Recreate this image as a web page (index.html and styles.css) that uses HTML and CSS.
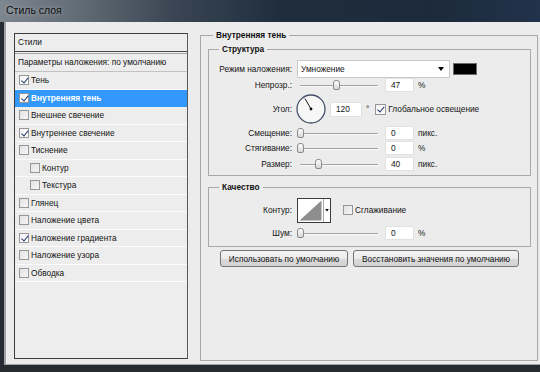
FILE: index.html
```html
<!DOCTYPE html>
<html lang="ru">
<head>
    <meta charset="UTF-8">
    <meta name="viewport" content="width=device-width, initial-scale=1.0">
    <title>Стиль слоя</title>
    <link rel="stylesheet" href="styles.css">
</head>
<body>
<div class="window">
    <div class="titlebar">Стиль слоя</div>

    <div class="dialog">
        <!-- список стилей слева -->
        <div class="styles-list">
            <div class="list-head">Стили</div>
            <div class="list-head blend">Параметры наложения: по умолчанию</div>
            <div class="item"><span class="check on"></span>Тень</div>
            <div class="item selected"><span class="check on"></span>Внутренняя тень</div>
            <div class="item"><span class="check"></span>Внешнее свечение</div>
            <div class="item"><span class="check on"></span>Внутреннее свечение</div>
            <div class="item"><span class="check"></span>Тиснение</div>
            <div class="item sub"><span class="check"></span>Контур</div>
            <div class="item sub"><span class="check"></span>Текстура</div>
            <div class="item"><span class="check"></span>Глянец</div>
            <div class="item"><span class="check"></span>Наложение цвета</div>
            <div class="item"><span class="check on"></span>Наложение градиента</div>
            <div class="item"><span class="check"></span>Наложение узора</div>
            <div class="item"><span class="check"></span>Обводка</div>
        </div>

        <!-- параметры эффекта -->
        <fieldset class="group outer">
            <legend>Внутренняя тень</legend>

            <fieldset class="group">
                <legend>Структура</legend>
                <div class="form structure">
                    <label>Режим наложения:</label>
                    <div class="ctrl">
                        <div class="select">Умножение<span class="arrow"></span></div>
                        <div class="swatch"></div>
                    </div>

                    <label>Непрозр.:</label>
                    <div class="ctrl">
                        <div class="slider"><span class="thumb" style="left: 39px"></span></div>
                        <span class="num">47</span><span class="unit">%</span>
                    </div>

                    <label>Угол:</label>
                    <div class="ctrl">
                        <svg class="dial" width="30" height="30" viewBox="0 0 30 30">
                            <circle cx="15" cy="15" r="14" fill="#f7f7f7" stroke="#46506a" stroke-width="1.3"/>
                            <line x1="15" y1="15" x2="9" y2="4.6" stroke="#1a1a1a" stroke-width="1"/>
                            <circle cx="15" cy="15" r="1.4" fill="#111"/>
                        </svg>
                        <span class="num wide">120</span><span class="unit deg">°</span>
                        <span class="check on global"></span><span>Глобальное освещение</span>
                    </div>

                    <label>Смещение:</label>
                    <div class="ctrl">
                        <div class="slider"><span class="thumb" style="left: 3px"></span></div>
                        <span class="num">0</span><span class="unit">пикс.</span>
                    </div>

                    <label>Стягивание:</label>
                    <div class="ctrl">
                        <div class="slider"><span class="thumb" style="left: 3px"></span></div>
                        <span class="num">0</span><span class="unit">%</span>
                    </div>

                    <label>Размер:</label>
                    <div class="ctrl">
                        <div class="slider"><span class="thumb" style="left: 21px"></span></div>
                        <span class="num">40</span><span class="unit">пикс.</span>
                    </div>
                </div>
            </fieldset>

            <fieldset class="group quality-box">
                <legend>Качество</legend>
                <div class="form quality">
                    <label>Контур:</label>
                    <div class="ctrl">
                        <svg class="contour" width="34" height="25" viewBox="0 0 34 25">
                            <rect x="0.5" y="0.5" width="33" height="24" fill="#fff" stroke="#3c3c3c"/>
                            <path d="M2.5 22.5 L24.5 2.5 L24.5 22.5 Z" fill="#8e8e8e"/>
                            <line x1="26.5" y1="1" x2="26.5" y2="24" stroke="#a8a8a8"/>
                            <path d="M28.2 11 h3.6 l-1.8 2.6 z" fill="#000"/>
                        </svg>
                        <span class="check smooth"></span><span>Сглаживание</span>
                    </div>

                    <label>Шум:</label>
                    <div class="ctrl">
                        <div class="slider"><span class="thumb" style="left: 3px"></span></div>
                        <span class="num">0</span><span class="unit">%</span>
                    </div>
                </div>
            </fieldset>

            <div class="buttons">
                <button class="btn">Использовать по умолчанию</button>
                <button class="btn">Восстановить значения по умолчанию</button>
            </div>
        </fieldset>
    </div>
</div>
</body>
</html>
```

FILE: styles.css
```css
html, body {
    margin: 0;
    padding: 0;
}
body {
    width: 540px;
    height: 372px;
    overflow: hidden;
    font-family: "Liberation Sans", Arial, sans-serif;
    font-size: 8.3px;
    color: #141414;
}
.window {
    height: 372px;
    display: flex;
    flex-direction: column;
    background-color: #262b32;
}
.titlebar {
    height: 22px;
    line-height: 21px;
    padding-left: 6px;
    font-size: 10.5px;
    color: #0e0e0e;
    text-shadow: 0 0 4px rgba(255, 255, 255, 0.45);
    background: linear-gradient(90deg, #7e868f 0%, #636d77 14%, #3a4653 32%, #1f2d3d 52%, #1c2a3b 80%, #22324a 100%);
}
.dialog {
    flex: 1;
    display: flex;
    align-items: flex-start;
    margin: 0 0 7px 4px;
    padding: 7px 0 0 8px;
    background-color: #ececec;
    border-left: 2px solid #9da1a7;
    border-bottom: 1px solid #a2a2a2;
}

/* список стилей */
.styles-list {
    width: 174px;
    height: 326px;
    margin-top: 4px;
    box-sizing: border-box;
    border: 1px solid #3d3d3d;
    border-right-color: #5a5a5a;
    background-color: #ededed;
}
.list-head {
    height: 17px;
    line-height: 17px;
    padding-left: 3px;
    border-bottom: 1px solid #4a4a4a;
}
.list-head.blend {
    margin-top: 1px;
    border-top: 1px solid #a5a5a5;
    border-bottom: 1px solid #c2c2c2;
}
.item {
    height: 16.5px;
    display: flex;
    align-items: center;
    padding-left: 4px;
    border-bottom: 1px solid #fbfbfb;
}
.item.sub {
    padding-left: 15px;
}
.item.selected {
    background-color: #3398fb;
    color: #fff;
    font-weight: bold;
    border-bottom-color: #3398fb;
}
.check {
    position: relative;
    flex: none;
    width: 10px;
    height: 10px;
    box-sizing: border-box;
    margin-right: 2px;
    border: 1px solid #979797;
    background: linear-gradient(135deg, #e2e2e2, #f6f6f6);
}
.check.on {
    background: linear-gradient(135deg, #f2f2f2, #ffffff);
}
.check.on::after {
    content: '';
    position: absolute;
    left: 2.5px;
    top: 0;
    width: 2.5px;
    height: 5.5px;
    border-right: 1.5px solid #23386a;
    border-bottom: 1.5px solid #23386a;
    transform: rotate(40deg);
}

/* группы */
fieldset.group {
    margin: 0;
    padding: 0;
    min-width: 0;
    border: 1px solid #a9a9a9;
    box-sizing: border-box;
}
fieldset.group legend {
    padding: 0 3px;
    margin-left: 10px;
    line-height: 12px;
    font-weight: bold;
    color: #111;
}
fieldset.outer {
    width: 338px;
    height: 332px;
    margin-left: 12px;
    padding: 0 6px 0 7px;
}
fieldset.outer > legend {
    margin-left: 5px;
}
fieldset.outer > fieldset.group {
    margin-top: 2px;
}
fieldset.outer > fieldset.quality-box {
    margin-top: 5px;
}

.form {
    display: grid;
    grid-template-columns: 83px auto;
    column-gap: 5px;
    align-items: center;
}
.form label {
    text-align: right;
}
.structure {
    grid-template-rows: 18px 14px 34px 14px 16px 16px;
    padding: 5px 0 3px;
}
.quality {
    grid-template-rows: 24px 14px;
    row-gap: 4px;
    padding: 5px 0 6px;
}
.ctrl {
    display: flex;
    align-items: center;
}

.select {
    width: 153px;
    height: 18px;
    box-sizing: border-box;
    display: flex;
    align-items: center;
    justify-content: space-between;
    padding: 0 5px 0 3px;
    background-color: #fff;
    border: 1px solid #c9c9c9;
}
.select .arrow {
    width: 0;
    height: 0;
    border-top: 4px solid #000;
    border-left: 3px solid transparent;
    border-right: 3px solid transparent;
}
.swatch {
    width: 24px;
    height: 12px;
    margin-left: 3px;
    box-sizing: border-box;
    background-color: #000;
    border: 1px solid #6b6b6b;
}

.slider {
    position: relative;
    width: 81px;
    height: 11px;
    margin-right: 7px;
}
.slider::before {
    content: '';
    position: absolute;
    left: 3px;
    right: 0;
    top: 5px;
    height: 1px;
    background-color: #a2a2a2;
    box-shadow: 0 1px 0 #fbfbfb;
}
.thumb {
    position: absolute;
    top: 0;
    width: 7px;
    height: 10px;
    margin-left: -3px;
    box-sizing: border-box;
    border: 1px solid #8b8b8b;
    border-radius: 3px 3px 2px 2px;
    background: linear-gradient(#ffffff, #d6d6d6);
}
.num {
    width: 29px;
    height: 14px;
    line-height: 12px;
    box-sizing: border-box;
    padding-left: 5px;
    background-color: #fff;
    border: 1px solid #e1e1e1;
}
.num.wide {
    width: 32px;
    height: 15px;
    line-height: 13px;
    margin-left: 4px;
}
.unit {
    margin-left: 4px;
}
.unit.deg {
    margin-left: 4px;
    margin-right: 6px;
}
.dial {
    margin-left: -1px;
}
.check.global {
    width: 11px;
    height: 11px;
}
.check.smooth {
    margin-left: 12px;
}

.buttons {
    display: flex;
    justify-content: center;
    gap: 5px;
    margin-top: 3px;
}
.btn {
    height: 17px;
    padding: 0;
    white-space: nowrap;
    font-family: inherit;
    font-size: 8.3px;
    color: #111;
    border: 1px solid #767676;
    border-radius: 3px;
    background: linear-gradient(#f4f4f4 0%, #ebebeb 50%, #dadada 51%, #d2d2d2 100%);
}
.btn:first-child {
    width: 128px;
}
.btn:last-child {
    width: 166px;
}
```
